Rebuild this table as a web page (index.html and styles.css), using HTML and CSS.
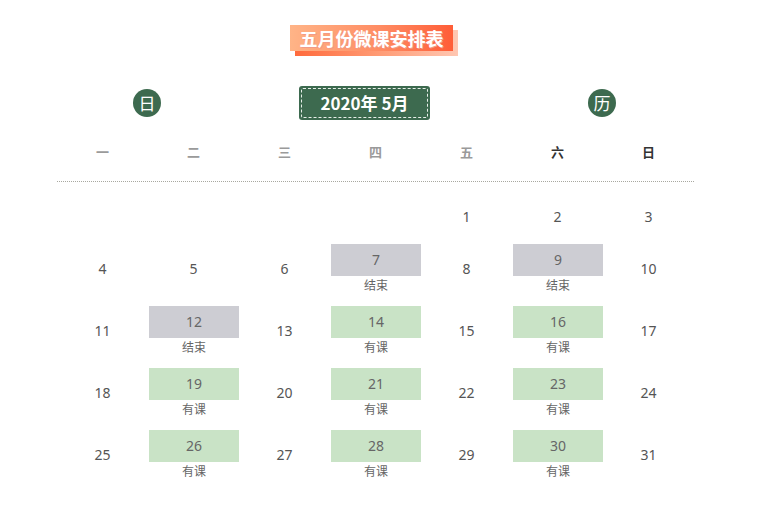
FILE: index.html
```html
<!DOCTYPE html>
<html lang="zh">
<head>
<meta charset="utf-8">
<link rel="stylesheet" href="styles.css">
</head>
<body>
<div class="page">
  <div class="title-wrap">
    <div class="title"><div class="face">五月份微课安排表</div></div>
  </div>
  <div class="head">
    <div class="circle c-left">日</div>
    <div class="month"><span>2020年 5月</span></div>
    <div class="circle c-right">历</div>
  </div>
  <div class="week">
    <div class="wd">一</div><div class="wd">二</div><div class="wd">三</div><div class="wd">四</div><div class="wd">五</div><div class="wd dark">六</div><div class="wd dark">日</div>
  </div>
  <div class="days">
    <div class="d"></div><div class="d"></div><div class="d"></div><div class="d"></div>
    <div class="d"><span class="n">1</span></div>
    <div class="d"><span class="n">2</span></div>
    <div class="d"><span class="n">3</span></div>

    <div class="d"><span class="n">4</span></div>
    <div class="d"><span class="n">5</span></div>
    <div class="d"><span class="n">6</span></div>
    <div class="d"><div class="box grey">7</div><div class="lbl">结束</div></div>
    <div class="d"><span class="n">8</span></div>
    <div class="d"><div class="box grey">9</div><div class="lbl">结束</div></div>
    <div class="d"><span class="n">10</span></div>

    <div class="d"><span class="n">11</span></div>
    <div class="d"><div class="box grey">12</div><div class="lbl">结束</div></div>
    <div class="d"><span class="n">13</span></div>
    <div class="d"><div class="box green">14</div><div class="lbl">有课</div></div>
    <div class="d"><span class="n">15</span></div>
    <div class="d"><div class="box green">16</div><div class="lbl">有课</div></div>
    <div class="d"><span class="n">17</span></div>

    <div class="d"><span class="n">18</span></div>
    <div class="d"><div class="box green">19</div><div class="lbl">有课</div></div>
    <div class="d"><span class="n">20</span></div>
    <div class="d"><div class="box green">21</div><div class="lbl">有课</div></div>
    <div class="d"><span class="n">22</span></div>
    <div class="d"><div class="box green">23</div><div class="lbl">有课</div></div>
    <div class="d"><span class="n">24</span></div>

    <div class="d"><span class="n">25</span></div>
    <div class="d"><div class="box green">26</div><div class="lbl">有课</div></div>
    <div class="d"><span class="n">27</span></div>
    <div class="d"><div class="box green">28</div><div class="lbl">有课</div></div>
    <div class="d"><span class="n">29</span></div>
    <div class="d"><div class="box green">30</div><div class="lbl">有课</div></div>
    <div class="d"><span class="n">31</span></div>
  </div>
</div>
</body>
</html>
```
FILE: styles.css
```css
html, body {
  margin: 0;
  padding: 0;
  background: #fff;
}
body {
  font-family: "Noto Sans", "Noto Sans CJK SC", sans-serif;
  color: #555;
}
.page {
  width: 768px;
  height: 507px;
  overflow: hidden;
}
.title-wrap {
  display: flex;
  padding-top: 25px;
  padding-left: 290px;
}
.title {
  position: relative;
  z-index: 0;
  width: 163px;
  height: 26px;
}
.title::before {
  content: "";
  position: absolute;
  z-index: -1;
  left: 5px;
  top: 5px;
  width: 163px;
  height: 26px;
  background: linear-gradient(90deg, #ff6a3c 0%, #ff9a73 50%, #ffc7b2 100%);
}
.face {
  position: relative;
  height: 26px;
  line-height: 26px;
  text-align: center;
  font-family: "Noto Sans CJK SC", sans-serif;
  font-weight: 700;
  font-size: 18px;
  color: #fff;
  text-shadow: 1px 1px 0 #f39a86;
  background: linear-gradient(90deg, #ffb487 0%, #ff8c63 55%, #ff5d37 100%);
}
.head {
  display: flex;
  align-items: center;
  margin-top: 35px;
  margin-left: 133px;
  height: 34px;
}
.circle {
  width: 28px;
  height: 28px;
  border-radius: 50%;
  background: #3d6a4f;
  color: #fff;
  font-family: "Noto Sans CJK SC", sans-serif;
  font-size: 17px;
  line-height: 28px;
  text-align: center;
}
.month {
  margin-left: 138px;
  width: 131px;
  height: 34px;
  background: #3d6a4f;
  border-radius: 3px;
  padding: 2px;
  box-sizing: border-box;
}
.month span {
  display: block;
  height: 100%;
  border: 1px dashed #e8efe9;
  border-radius: 2px;
  box-sizing: border-box;
  color: #fff;
  font-family: "Noto Sans CJK SC", sans-serif;
  font-weight: 700;
  font-size: 17px;
  line-height: 27px;
  text-align: center;
}
.c-right {
  margin-left: 158px;
}
.week {
  display: grid;
  grid-template-columns: repeat(7, 91px);
  margin-left: 57px;
  width: 637px;
  margin-top: 18px;
  height: 28px;
  padding-bottom: 15px;
  border-bottom: 1px dotted #a8a8a0;
}
.wd {
  text-align: center;
  font-family: "Noto Sans CJK SC", sans-serif;
  font-weight: 700;
  font-size: 13px;
  line-height: 28px;
  color: #9a9a9a;
}
.wd.dark {
  color: #333;
}
.days {
  display: grid;
  grid-template-columns: repeat(7, 91px);
  grid-template-rows: 52px repeat(4, 62px);
  margin-left: 57px;
  width: 637px;
  margin-top: 10px;
}
.d {
  display: flex;
  flex-direction: column;
  align-items: center;
}
.n {
  display: block;
  height: 50px;
  line-height: 50px;
  font-size: 14px;
  color: #555;
}
.box {
  width: 90px;
  height: 32px;
  line-height: 32px;
  text-align: center;
  font-size: 14px;
  color: #666;
  margin-left: 1px;
}
.box.grey {
  background: #cdcdd3;
}
.box.green {
  background: #c9e3c6;
}
.lbl {
  font-family: "Noto Sans CJK SC", sans-serif;
  font-size: 12px;
  line-height: 18px;
  color: #666;
  margin-left: 1px;
}
```
